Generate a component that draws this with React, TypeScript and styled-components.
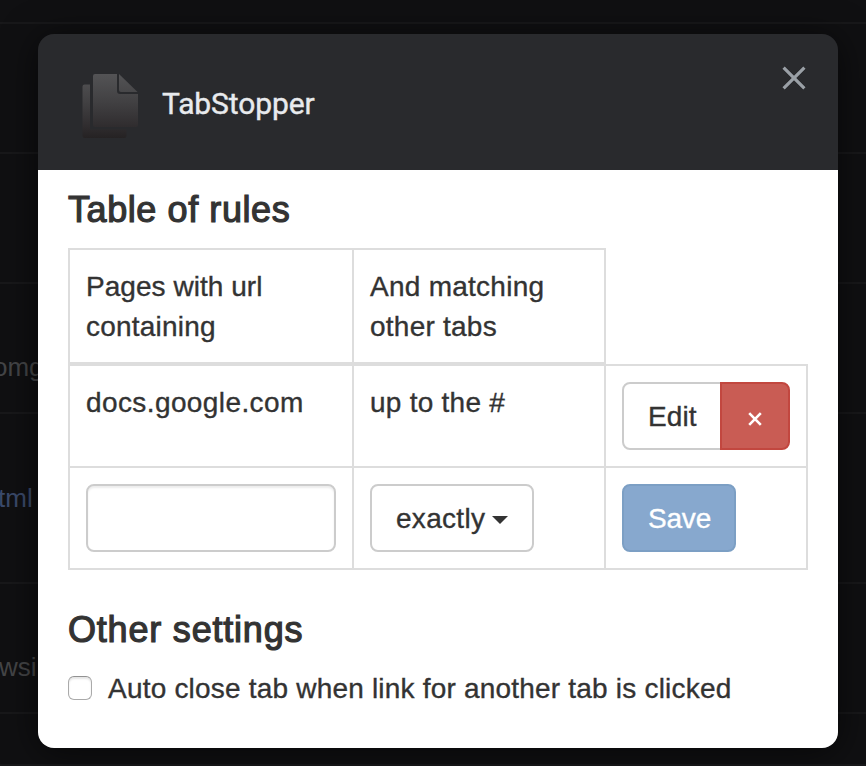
import React from "react";
import styled, { createGlobalStyle, css } from "styled-components";

const GlobalStyle = createGlobalStyle`
  *, *::before, *::after { box-sizing: border-box; }
  html, body, #root { height: 100%; }
  body { margin: 0; background: #101012; overflow: hidden; }
`;

const Page = styled.div`
  position: relative;
  height: 766px;
  overflow: hidden;
  background: #101012;
  color: #333;
  font: 28px/40px "Liberation Sans", Arial, sans-serif;
`;

const Backdrop = styled.div`
  position: absolute;
  inset: 0;
  display: flex;
  flex-direction: column;
`;

const BackdropRow = styled.div<{ $height: number }>`
  flex: none;
  display: flex;
  align-items: center;
  height: ${(p) => p.$height}px;
  border-bottom: 2px solid #18181a;
`;

const BackdropText = styled.span<{ $link?: boolean; $shift: number; $drop: number }>`
  margin-left: ${(p) => p.$shift}px;
  padding-top: ${(p) => p.$drop}px;
  font-size: 26px;
  color: ${(p) => (p.$link ? "#3b4a6b" : "#444547")};
`;

const Dialog = styled.section`
  position: relative;
  width: 800px;
  height: 714px;
  margin: 34px 28px 18px 38px;
  border-radius: 16px;
  overflow: hidden;
  box-shadow: 0 4px 36px rgba(0, 0, 0, 0.6);
`;

const Shade = styled.div`
  overflow: hidden;
  height: 100%;
`;

const Header = styled.header`
  display: flex;
  align-items: flex-start;
  height: 136px;
  padding-left: 44px;
  padding-right: 32px;
  background: #292a2d;
`;

const Logo = styled.svg`
  flex: none;
  width: 58px;
  height: 66px;
  margin-top: 39px;
`;

const Title = styled.h1`
  flex: 1;
  margin: 50px 0 0 22px;
  font: 400 30px/40px Roboto, sans-serif;
  letter-spacing: -0.1px;
  color: #e8eaed;
  -webkit-text-stroke: 0.4px #e8eaed;
`;

const CloseButton = styled.button`
  display: flex;
  margin: 32px 0 0;
  padding: 0;
  border: 0;
  background: none;
`;

const Content = styled.main`
  height: 578px;
  padding: 20px 30px;
  background: #fff;
`;

const Heading = styled.h2<{ $spacing: number }>`
  margin: 0;
  font-size: 36px;
  font-weight: 400;
  line-height: 40px;
  letter-spacing: ${(p) => p.$spacing}px;
  -webkit-text-stroke: 1.2px #333;
`;

const RulesTable = styled.table`
  display: block;
  width: 740px;
  margin: 18px 0 40px;
`;

const TableHead = styled.thead`
  display: block;
`;

const TableBody = styled.tbody`
  display: block;
  border-top: 2px solid #ddd;
`;

const Row = styled.tr`
  display: grid;
  grid-template-columns: 286px 252px 202px;
`;

const cell = css`
  display: block;
  padding: 16px;
  border: solid #ddd;
  border-width: 0 2px 2px 0;
  text-align: left;
  font-weight: 400;
  &:first-child {
    border-left-width: 2px;
  }
`;

const HeadCell = styled.th`
  ${cell}
  height: 116px;
  border-top-width: 2px;
`;

const Cell = styled.td`
  ${cell}
  height: 102px;
`;

const Text = styled.span<{ $spacing: number }>`
  display: block;
  padding-top: 1px;
  margin-bottom: -1px;
  letter-spacing: ${(p) => p.$spacing}px;
  -webkit-text-stroke: 0.35px currentColor;
`;

const UrlInput = styled.input`
  display: block;
  width: 250px;
  height: 68px;
  padding: 12px 24px;
  border: 2px solid #ccc;
  border-radius: 8px;
  font: inherit;
  box-shadow: inset 0 2px 2px rgba(0, 0, 0, 0.075);
`;

const variants = {
  default: css`
    background: #fff;
    border-color: #ccc;
    color: #333;
  `,
  danger: css`
    background: #c95c54;
    border-color: #c2473f;
    color: #fff;
  `,
  primary: css`
    background: #87a8ce;
    border-color: #7c9fc4;
    color: #fff;
  `,
};

const Button = styled.button<{ $variant: keyof typeof variants; $width: number }>`
  display: flex;
  align-items: center;
  width: ${(p) => p.$width}px;
  height: 68px;
  padding: 0 0 0 24px;
  border: 2px solid;
  border-radius: 8px;
  font: inherit;
  ${(p) => variants[p.$variant]}
`;

const ButtonGroup = styled.div`
  display: flex;
  ${Button}:first-child {
    border-radius: 8px 0 0 8px;
  }
  ${Button}:last-child {
    margin-left: -2px;
    border-radius: 0 8px 8px 0;
  }
`;

const RemoveIcon = styled.svg`
  width: 14px;
  height: 14px;
  margin: 5px 0 0 2px;
`;

const Caret = styled.span`
  margin: 4px 0 0 7px;
  border: 8px solid transparent;
  border-top-color: #333;
  border-bottom: 0;
`;

const Option = styled.label`
  display: flex;
  align-items: center;
  gap: 16px;
  margin-top: 18px;
`;

const Checkbox = styled.input`
  appearance: none;
  width: 24px;
  height: 24px;
  margin: 0;
  border: 1px solid #aaa;
  border-top-color: #929292;
  border-radius: 6px;
  background: #fff;
  box-shadow: inset 0 2px 2px rgba(0, 0, 0, 0.1);
`;

const backdropRows: { height: number; text?: string; link?: boolean; shift?: number; drop?: number }[] = [
  { height: 24 },
  { height: 130 },
  { height: 130 },
  { height: 130, text: "omg", shift: -7, drop: 38 },
  { height: 170, text: "tml", link: true, shift: -2, drop: 0 },
  { height: 130, text: "wsi", shift: -1, drop: 38 },
  { height: 52 },
];

function PagesLogo() {
  return (
    <Logo viewBox="0 0 58 66">
      <defs>
        <linearGradient id="paper" x1="0" y1="0" x2="0" y2="66" gradientUnits="userSpaceOnUse">
          <stop offset="0" stopColor="#545456" />
          <stop offset="0.45" stopColor="#414042" />
          <stop offset="0.8" stopColor="#302d2f" />
          <stop offset="1" stopColor="#242122" />
        </linearGradient>
      </defs>
      <g fill="url(#paper)">
        <path d="M2.5 11.5H8V56.5H44.5V63q0 2-2 2H2.5q-2 0-2-2V13.5q0-2 2-2Z" />
        <path d="M13 1H35V18q0 3 3 3H56V52q0 2-2 2H13q-2 0-2-2V3q0-2 2-2Z" />
        <path d="M37 1L55.5 19H39q-2 0-2-2Z" />
      </g>
    </Logo>
  );
}

export default function App() {
  return (
    <>
      <GlobalStyle />
      <Page>
        <Backdrop aria-hidden="true">
          {backdropRows.map((row, i) => (
            <BackdropRow key={i} $height={row.height}>
              {row.text && (
                <BackdropText $link={row.link} $shift={row.shift ?? 0} $drop={row.drop ?? 0}>
                  {row.text}
                </BackdropText>
              )}
            </BackdropRow>
          ))}
        </Backdrop>
        <Shade>
          <Dialog role="dialog" aria-label="TabStopper">
            <Header>
              <PagesLogo />
              <Title>TabStopper</Title>
              <CloseButton aria-label="Close">
                <svg width="24" height="24" viewBox="0 0 24 24">
                  <path d="M1.6 1.6L22.4 22.4M22.4 1.6L1.6 22.4" stroke="#9aa0a6" strokeWidth="3.2" />
                </svg>
              </CloseButton>
            </Header>
            <Content>
              <Heading $spacing={0.58}>Table of rules</Heading>
              <RulesTable>
                <TableHead>
                  <Row>
                    <HeadCell>
                      <Text $spacing={0.04}>Pages with url</Text>
                      <Text $spacing={0.22}>containing</Text>
                    </HeadCell>
                    <HeadCell>
                      <Text $spacing={0.26}>And matching</Text>
                      <Text $spacing={0.24}>other tabs</Text>
                    </HeadCell>
                  </Row>
                </TableHead>
                <TableBody>
                  <Row>
                    <Cell>
                      <Text $spacing={0.4}>docs.google.com</Text>
                    </Cell>
                    <Cell>
                      <Text $spacing={0.25}>up to the #</Text>
                    </Cell>
                    <Cell>
                      <ButtonGroup>
                        <Button $variant="default" $width={100}>
                          <Text $spacing={0.1}>Edit</Text>
                        </Button>
                        <Button $variant="danger" $width={70} aria-label="Delete rule">
                          <RemoveIcon viewBox="0 0 14 14">
                            <path d="M1.2 1.2L12.8 12.8M12.8 1.2L1.2 12.8" stroke="#fff" strokeWidth="2.6" />
                          </RemoveIcon>
                        </Button>
                      </ButtonGroup>
                    </Cell>
                  </Row>
                  <Row>
                    <Cell>
                      <UrlInput aria-label="Url" />
                    </Cell>
                    <Cell>
                      <Button $variant="default" $width={164}>
                        <Text $spacing={0.3}>exactly</Text>
                        <Caret />
                      </Button>
                    </Cell>
                    <Cell>
                      <Button $variant="primary" $width={114}>
                        <Text $spacing={-0.2}>Save</Text>
                      </Button>
                    </Cell>
                  </Row>
                </TableBody>
              </RulesTable>
              <Heading $spacing={0.8}>Other settings</Heading>
              <Option>
                <Checkbox type="checkbox" />
                <Text $spacing={0.2}>Auto close tab when link for another tab is clicked</Text>
              </Option>
            </Content>
          </Dialog>
        </Shade>
      </Page>
    </>
  );
}
